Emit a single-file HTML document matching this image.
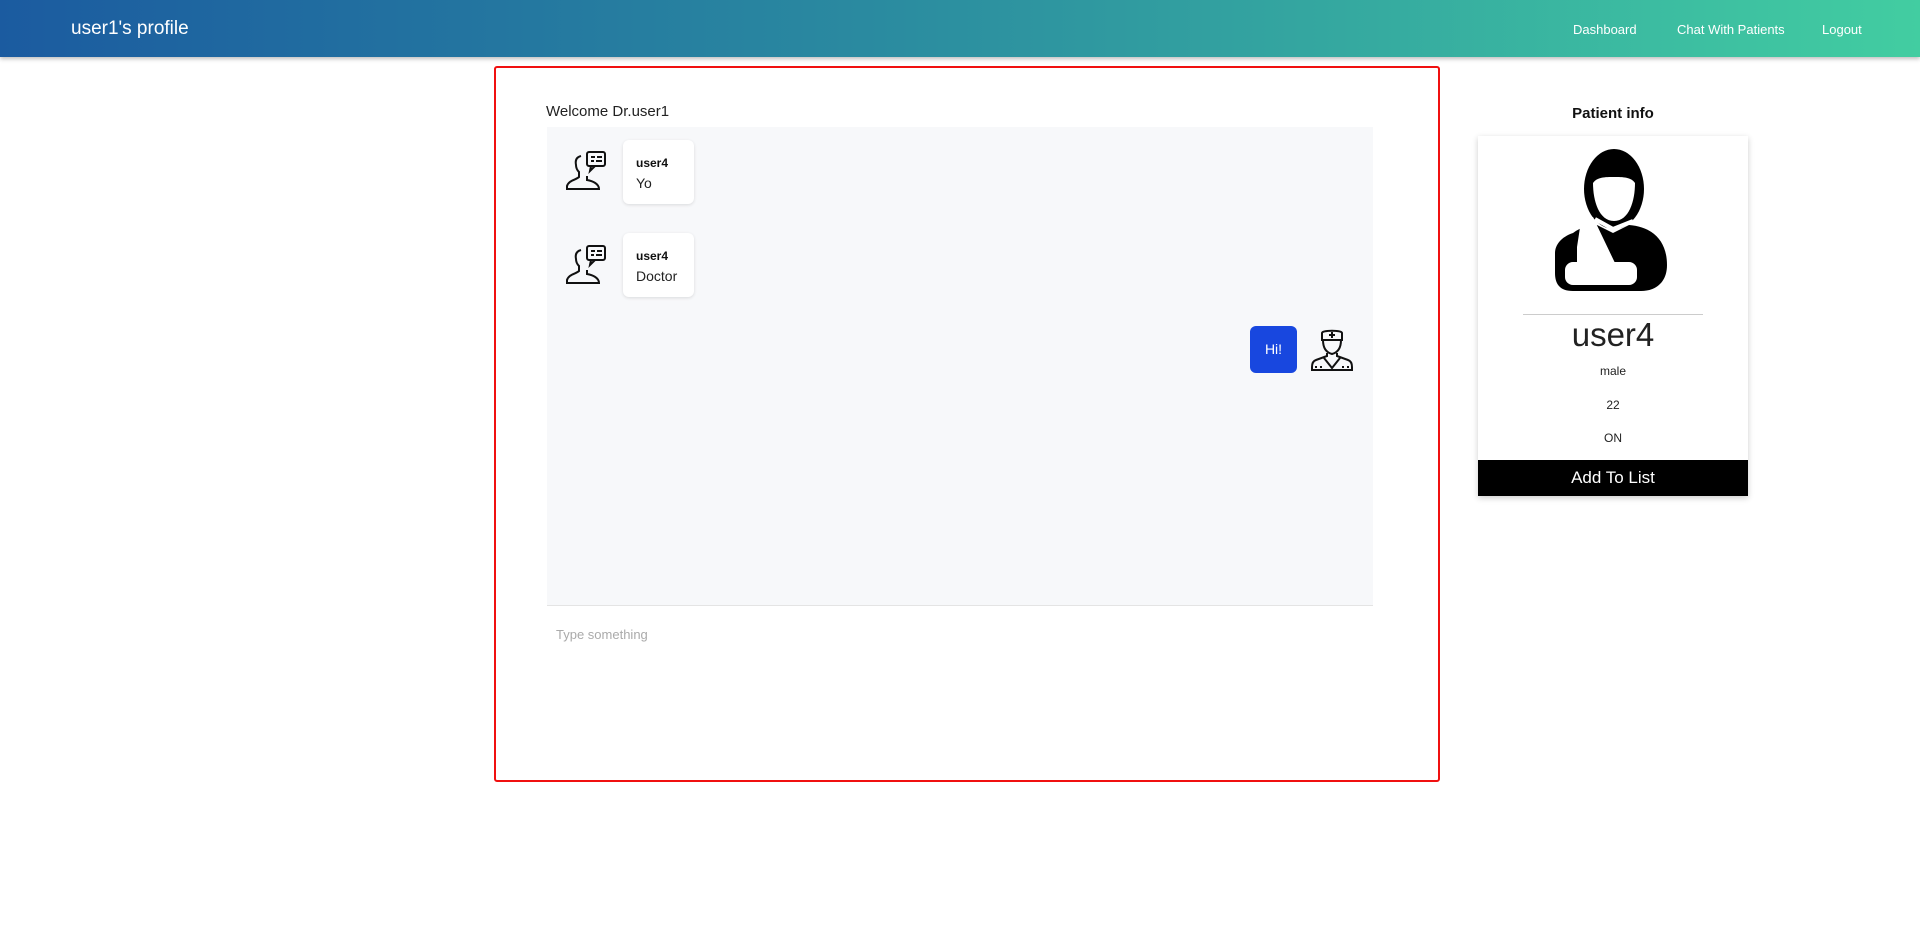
<!DOCTYPE html>
<html><head><meta charset="utf-8"><style>
*{box-sizing:border-box;margin:0;padding:0}
body{width:1920px;height:937px;background:#fff;font-family:"Liberation Sans",sans-serif;position:relative;overflow:hidden;color:#222}
.nav{position:absolute;left:0;top:0;width:1920px;height:57px;background:linear-gradient(90deg,#1b5ba0,#2a8aa0 45%,#42cda1);box-shadow:0 2px 4px rgba(0,0,0,.25)}
.nav .t{position:absolute;left:71px;top:18px;color:#fff;font-size:19px}
.nav a{position:absolute;top:22px;color:#fff;font-size:13px;text-decoration:none}
.red{position:absolute;left:494px;top:66px;width:946px;height:716px;border:2.5px solid #f01010;border-radius:3px}
.abs{position:absolute}
.chat{position:absolute;left:547px;top:127px;width:826px;height:479px;background:#f7f8fa;border-bottom:1px solid #e4e4e4}
.bub{position:absolute;background:#fff;border-radius:6px;box-shadow:0 1px 3px rgba(0,0,0,.12);padding:16px 0 0 13px;font-size:14px}
.bub b{font-size:12px;display:block;margin-bottom:5px;color:#111}
.card{position:absolute;left:1478px;top:136px;width:270px;height:360px;background:#fff;box-shadow:0 2px 6px rgba(0,0,0,.2);text-align:center}
.card .s{position:absolute;left:0;width:270px;font-size:12px;color:#222}
</style></head><body>
<div class="nav"><div class="t">user1's profile</div>
<a style="left:1573px">Dashboard</a><a style="left:1677px">Chat With Patients</a><a style="left:1822px">Logout</a></div>
<div class="red"></div>
<div class="abs" style="left:546px;top:103px;font-size:15px;color:#222">Welcome Dr.user1</div>
<div class="chat">
<svg class="abs" style="left:18px;top:23px" width="44" height="44" viewBox="0 0 44 44" fill="none" stroke="#111" stroke-width="2"><path d="M16 6c-4 1-6 4-5 9 0 3 1 5 3 7v5c-3 3-10 3-12 9v3h32c0-5-6-8-12-9v-4"/><rect x="22" y="2" width="18" height="14" rx="2"/><path d="M26 16l-1 5 5-5M26 7h4M32 7h5M26 11h3M31 11h6"/></svg>
<div class="bub" style="left:76px;top:13px;width:71px;height:64px"><b>user4</b>Yo</div>
<svg class="abs" style="left:18px;top:117px" width="44" height="44" viewBox="0 0 44 44" fill="none" stroke="#111" stroke-width="2"><path d="M16 6c-4 1-6 4-5 9 0 3 1 5 3 7v5c-3 3-10 3-12 9v3h32c0-5-6-8-12-9v-4"/><rect x="22" y="2" width="18" height="14" rx="2"/><path d="M26 16l-1 5 5-5M26 7h4M32 7h5M26 11h3M31 11h6"/></svg>
<div class="bub" style="left:76px;top:106px;width:71px;height:64px"><b>user4</b>Doctor</div>
<div class="abs" style="left:703px;top:199px;width:47px;height:47px;background:#1847df;border-radius:6px;color:#fff;font-size:14px;text-align:center;line-height:47px">Hi!</div>
<svg class="abs" style="left:763px;top:200px" width="44" height="45" viewBox="0 0 44 45" fill="none" stroke="#111" stroke-width="2"><path d="M12 13V6c0-3 20-3 20 0v7zM22 5v6M19 8h6M13 13c0 5 1 12 9 14 8-2 9-9 9-14M17 26v3l-11 4c-3 1-4 4-4 7v3h40v-3c0-3-1-6-4-7l-11-4v-3M14 31l8 10 8-10M5 40h2M10 40h2M32 40h2M37 40h2"/></svg>
</div>
<div class="abs" style="left:556px;top:627px;font-size:13px;color:#aaa">Type something</div>
<div class="abs" style="left:1478px;top:105px;width:270px;text-align:center;font-weight:bold;font-size:15px;color:#111">Patient info</div>
<div class="card">
<svg class="abs" style="left:75px;top:13px" width="120" height="152" viewBox="0 0 120 152"><ellipse cx="61" cy="40" rx="30" ry="40" fill="#000"/><path d="M40 34c4-6 12-6 21-6s17 0 21 6c0 18-6 38-21 38S40 52 40 34z" fill="#fff"/><path d="M20 84c8-6 16-8 24-8l16 8 16-8c26 2 38 18 38 40 0 18-12 26-26 26H20C6 142 2 134 2 124V104c0-8 6-16 18-20z" fill="#000"/><path d="M24 98l4-26 12-4 22 46H38c-4 0-10 2-14-1z" fill="#fff"/><rect x="12" y="113" width="72" height="23" rx="8" fill="#fff"/><path d="M42 70l18 10 20-8" fill="none" stroke="#fff" stroke-width="4"/></svg>
<div class="abs" style="left:45px;top:178px;width:180px;height:1px;background:#ccc"></div>
<div class="abs" style="left:0;top:180px;width:270px;font-size:33px;color:#222">user4</div>
<div class="s" style="top:228px">male</div>
<div class="s" style="top:262px">22</div>
<div class="s" style="top:295px">ON</div>
<div class="abs" style="left:0;top:324px;width:270px;height:36px;background:#000;color:#fff;font-size:17px;line-height:36px">Add To List</div>
</div>
</body></html>
